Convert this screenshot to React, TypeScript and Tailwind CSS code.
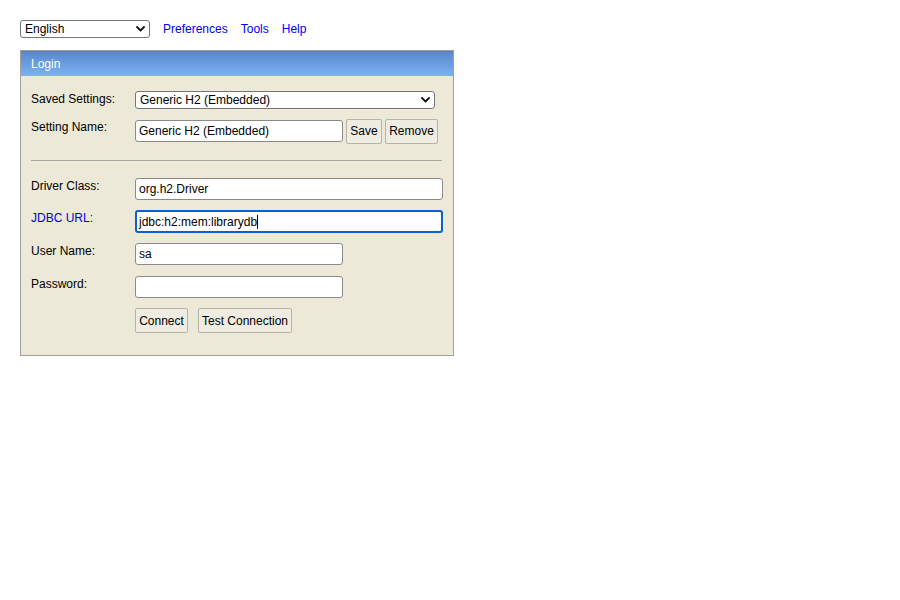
import type { ReactNode } from 'react';

function Chevron() {
  return (
    <svg width="9" height="6" viewBox="0 0 9 6" className="shrink-0">
      <path d="M1 1l3.5 3.5L8 1" fill="none" stroke="#111" strokeWidth="1.8" strokeLinecap="round" strokeLinejoin="round" />
    </svg>
  );
}

function FakeSelect({ value, className }: { value: string; className: string }) {
  return (
    <div
      className={`flex items-center justify-between pl-[4px] pr-[4px] bg-white border border-[#767676] rounded-[3px] text-[12px] leading-none text-black ${className}`}
    >
      <span>{value}</span>
      <Chevron />
    </div>
  );
}

function TextBox({ value = '', width }: { value?: string; width: string }) {
  return (
    <input
      type="text"
      readOnly
      value={value}
      className={`${width} h-[22px] px-[3px] bg-white border border-[#8a8a8a] rounded-[3px] text-[12px] text-black outline-none`}
    />
  );
}

function Btn({ children, width }: { children: ReactNode; width: string }) {
  return (
    <button
      type="button"
      className={`${width} h-[25px] bg-[#efece2] border border-[#b5b2a8] rounded-[2px] text-[12px] text-black flex items-center justify-center`}
    >
      {children}
    </button>
  );
}

function Row({ label, children, labelClass = 'text-black', className = '' }: { label: string; children: ReactNode; labelClass?: string; className?: string }) {
  return (
    <div className={`flex items-start ${className}`}>
      <div className={`w-[104px] shrink-0 text-[12px] leading-[14px] pt-[1px] ${labelClass}`}>{label}</div>
      {children}
    </div>
  );
}

export default function App() {
  return (
    <div className="w-[900px] h-[600px] bg-white pl-[20px] pt-[20px] font-['Liberation_Sans',Arial,sans-serif]">
      {/* language picker + nav links */}
      <div className="flex items-center h-[18px]">
        <FakeSelect value="English" className="w-[130px] h-[18px]" />
        <a href="#" className="ml-[13px] text-[12px] text-[#0000ee]">Preferences</a>
        <a href="#" className="ml-[13px] text-[12px] text-[#0000ee]">Tools</a>
        <a href="#" className="ml-[13px] text-[12px] text-[#0000ee]">Help</a>
      </div>

      {/* login panel */}
      <div className="mt-[12px] w-[434px] h-[306px] border border-[#a3a199] bg-[#ece9d8]">
        <div className="h-[25px] border-t border-[#5a7cb8] bg-gradient-to-b from-[#5a88cf] to-[#7cb3f3] flex items-center pl-[10px] pb-[1px] text-[12px] text-white">
          Login
        </div>

        <div className="px-[10px]">
          <Row label="Saved Settings:" className="mt-[15px]">
            <FakeSelect value="Generic H2 (Embedded)" className="w-[300px] h-[18px] pl-[4px]" />
          </Row>

          <Row label="Setting Name:" className="mt-[10px]">
            <div className="flex items-center h-[24px]">
              <TextBox value="Generic H2 (Embedded)" width="w-[208px]" />
              <div className="ml-[3px]">
                <Btn width="w-[36px]">Save</Btn>
              </div>
              <div className="ml-[3px]">
                <Btn width="w-[53px]">Remove</Btn>
              </div>
            </div>
          </Row>

          <div className="mt-[17px] h-px w-[411px] bg-[#a8a69e]" />

          <Row label="Driver Class:" className="mt-[17px]">
            <TextBox value="org.h2.Driver" width="w-[308px]" />
          </Row>

          <Row label="JDBC URL:" labelClass="text-[#0000ee]" className="mt-[10px]">
            <div className="w-[308px] h-[23px] flex items-center px-[2px] bg-white border-2 border-[#0b5fd0] rounded-[3px] text-[12px] text-black">
              <span>jdbc:h2:mem:librarydb</span>
              <span className="w-px h-[14px] bg-black" />
            </div>
          </Row>

          <Row label="User Name:" className="mt-[10px]">
            <TextBox value="sa" width="w-[208px]" />
          </Row>

          <Row label="Password:" className="mt-[11px]">
            <TextBox width="w-[208px]" />
          </Row>

          <div className="flex mt-[10px] pl-[104px] gap-[10px]">
            <Btn width="w-[53px]">Connect</Btn>
            <Btn width="w-[94px]">Test Connection</Btn>
          </div>
        </div>
      </div>
    </div>
  );
}
